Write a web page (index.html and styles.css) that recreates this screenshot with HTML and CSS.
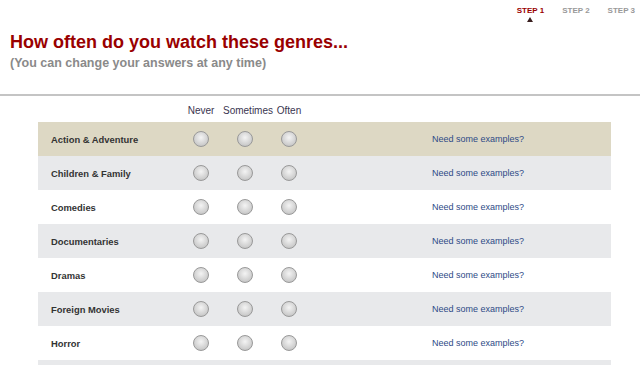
FILE: index.html
```html
<!DOCTYPE html>
<html>
<head>
  <meta charset="UTF-8">
  <title>Rate Genres - Step 1</title>
  <link rel="stylesheet" href="styles.css">
</head>
<body>
  <div class="steps">
    <span class="step active">STEP 1</span>
    <span class="step">STEP 2</span>
    <span class="step">STEP 3</span>
  </div>

  <div class="header">
    <h1>How often do you watch these genres...</h1>
    <p class="sub">(You can change your answers at any time)</p>
  </div>

  <div class="genres">
    <div class="row head">
      <span></span>
      <span class="col">Never</span>
      <span class="col">Sometimes</span>
      <span class="col">Often</span>
      <span></span>
    </div>

    <div class="row first">
      <span class="name">Action &amp; Adventure</span>
      <span class="col"><i class="radio"></i></span>
      <span class="col"><i class="radio"></i></span>
      <span class="col"><i class="radio"></i></span>
      <a class="examples" href="#">Need some examples?</a>
    </div>
    <div class="row alt">
      <span class="name">Children &amp; Family</span>
      <span class="col"><i class="radio"></i></span>
      <span class="col"><i class="radio"></i></span>
      <span class="col"><i class="radio"></i></span>
      <a class="examples" href="#">Need some examples?</a>
    </div>
    <div class="row">
      <span class="name">Comedies</span>
      <span class="col"><i class="radio"></i></span>
      <span class="col"><i class="radio"></i></span>
      <span class="col"><i class="radio"></i></span>
      <a class="examples" href="#">Need some examples?</a>
    </div>
    <div class="row alt">
      <span class="name">Documentaries</span>
      <span class="col"><i class="radio"></i></span>
      <span class="col"><i class="radio"></i></span>
      <span class="col"><i class="radio"></i></span>
      <a class="examples" href="#">Need some examples?</a>
    </div>
    <div class="row">
      <span class="name">Dramas</span>
      <span class="col"><i class="radio"></i></span>
      <span class="col"><i class="radio"></i></span>
      <span class="col"><i class="radio"></i></span>
      <a class="examples" href="#">Need some examples?</a>
    </div>
    <div class="row alt">
      <span class="name">Foreign Movies</span>
      <span class="col"><i class="radio"></i></span>
      <span class="col"><i class="radio"></i></span>
      <span class="col"><i class="radio"></i></span>
      <a class="examples" href="#">Need some examples?</a>
    </div>
    <div class="row">
      <span class="name">Horror</span>
      <span class="col"><i class="radio"></i></span>
      <span class="col"><i class="radio"></i></span>
      <span class="col"><i class="radio"></i></span>
      <a class="examples" href="#">Need some examples?</a>
    </div>
    <!-- next row only peeks in at the bottom edge -->
    <div class="row alt"></div>
  </div>
</body>
</html>
```

FILE: styles.css
```css
body { margin: 0; font-family: "Liberation Sans", Arial, sans-serif; background: #fff; overflow: hidden; }

.steps { display: flex; justify-content: flex-end; gap: 18px; padding: 6px 5px 0 0; height: 17px; }
.step { position: relative; font-size: 8px; font-weight: bold; color: #999; }
.step.active { color: #990000; }
.step.active::after {
  content: "";
  position: absolute;
  left: 50%;
  top: 11px;
  margin-left: -3px;
  border-left: 3px solid transparent;
  border-right: 3px solid transparent;
  border-bottom: 5px solid #3a2020;
}

.header { padding: 8px 10px 0; height: 73px; border-bottom: 2px solid #c4c4c4; box-sizing: border-box; }
.header h1 { margin: 0; font-size: 18px; color: #990000; line-height: 22px; }
.header .sub { margin: 3px 0 0; font-size: 12.5px; font-weight: bold; color: #8a8a8a; }

.genres { margin: 0 29px 0 38px; }
.row {
  display: grid;
  grid-template-columns: 141px 44px 44px 44px 1fr;
  align-items: center;
  height: 34px;
  font-size: 9.4px;
}
.row.head { height: 26px; color: #3a3550; font-size: 10px; align-items: start; padding-top: 9px; box-sizing: border-box; }
.row.first { background: #ddd8c4; }
.row.alt { background: #e8e9eb; }
.col { text-align: center; white-space: nowrap; }
.name { padding-left: 13px; font-weight: bold; color: #333; }
.examples { padding-left: 121px; font-size: 9px; color: #2e4a86; text-decoration: none; }

.radio {
  display: inline-block;
  width: 14px;
  height: 14px;
  border: 1px solid #999;
  border-radius: 50%;
  vertical-align: middle;
  background: radial-gradient(circle at 50% 40%, #f4f4f4 0, #d4d4d4 55%, #b8b8b8 100%);
}
```
